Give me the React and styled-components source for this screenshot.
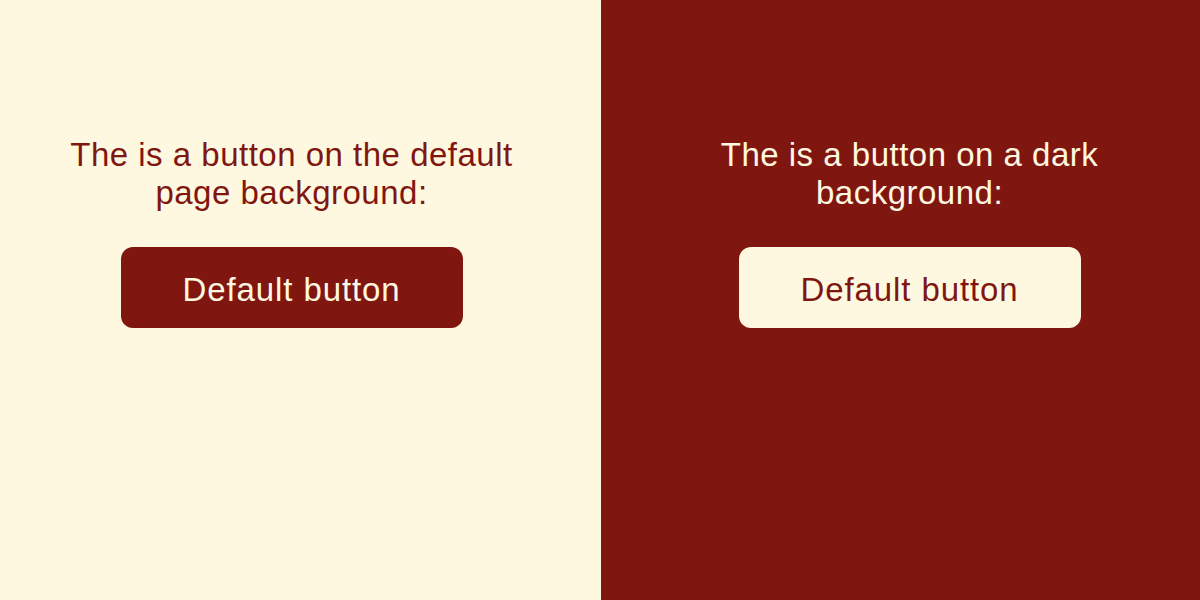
import React from "react";
import styled, { createGlobalStyle } from "styled-components";

const cream = "#fff8e1";
const wine = "#7f1710";

const GlobalStyle = createGlobalStyle`
    html, body {
        margin: 0;
        padding: 0;
        height: 100%;
    }
    body {
        font-family: "Liberation Sans", Arial, Helvetica, sans-serif;
    }
`;

const Page = styled.div`
    display: grid;
    grid-template-columns: 601px 1fr;
    width: 1200px;
    height: 600px;
`;

const Panel = styled.section`
    display: flex;
    flex-direction: column;
    align-items: center;
    padding-top: 136px;
    padding-left: ${(p) => (p.dark ? "18px" : "0")};
    padding-right: ${(p) => (p.dark ? "0" : "18px")};
    background: ${(p) => (p.dark ? wine : cream)};
    color: ${(p) => (p.dark ? cream : wine)};
`;

const Caption = styled.p`
    margin: 0 0 35px;
    max-width: 490px;
    font-size: 33px;
    line-height: 38px;
    letter-spacing: 0.5px;
    text-align: center;
`;

const Button = styled.button`
    display: flex;
    justify-content: center;
    align-items: center;
    width: 342px;
    height: 81px;
    padding: 5px 0 0;
    border: none;
    border-radius: 12px;
    font-family: inherit;
    font-size: 33px;
    letter-spacing: 0.9px;
    background: ${(p) => (p.dark ? cream : wine)};
    color: ${(p) => (p.dark ? wine : cream)};
    cursor: pointer;
`;

const App = () => {
    return (
        <>
            <GlobalStyle />
            <Page>
                <Panel>
                    <Caption>The is a button on the default page background:</Caption>
                    <Button>Default button</Button>
                </Panel>
                <Panel dark>
                    <Caption>The is a button on a dark background:</Caption>
                    <Button dark>Default button</Button>
                </Panel>
            </Page>
        </>
    );
};

export default App;
